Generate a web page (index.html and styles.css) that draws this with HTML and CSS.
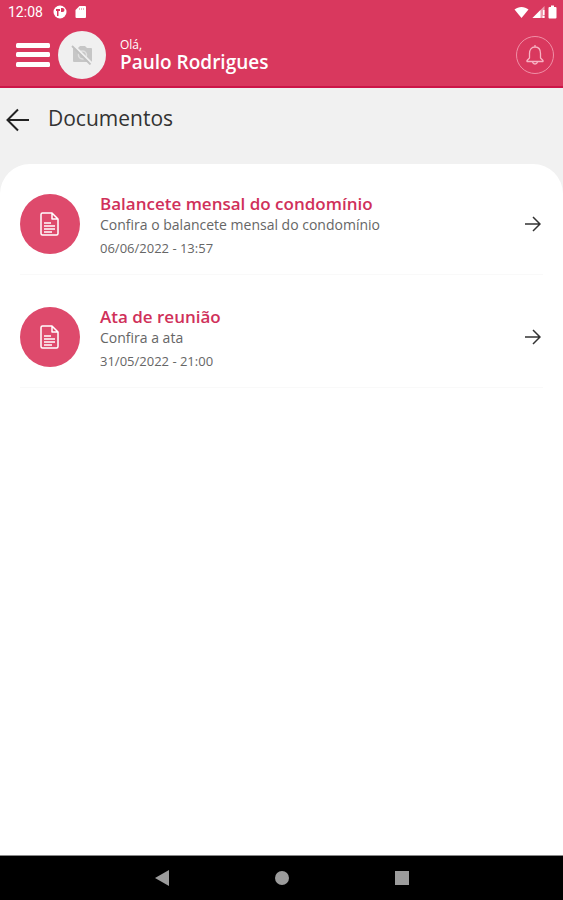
FILE: index.html
```html
<!DOCTYPE html>
<html lang="pt-BR">
<head>
    <meta charset="UTF-8">
    <meta name="viewport" content="width=device-width, initial-scale=1.0">
    <title>Documentos</title>
    <link rel="stylesheet" href="styles.css">
</head>
<body>

    <!-- Header -->
    <header class="header">
        <div class="status-bar">
            <span class="clock">12:08</span>
            <svg width="14" height="14" viewBox="0 0 14 14">
                <circle cx="7" cy="7" r="6.5" fill="#fff"/>
                <path d="M3 4h4v2H5.500v5H4V6H3zM8 3h1.500a2 2 0 0 1 0 4H8z" fill="#d9385e"/>
            </svg>
            <svg width="12" height="14" viewBox="0 0 12 14">
                <path d="M4.500 1H10a1 1 0 0 1 1 1v10a1 1 0 0 1-1 1H1.500a1 1 0 0 1-1-1V5z" fill="#fff"/>
                <path d="M4.500 3v2M6.500 3v2M8.500 3v2" stroke="#d9385e" stroke-width=".4"/>
            </svg>
            <div class="status-right">
                <svg width="15" height="14" viewBox="0 0 15 14">
                    <path d="M7.500 13L.5 4.500C4.500 1 10.500 1 14.500 4.500z" fill="#fff"/>
                </svg>
                <svg width="13" height="14" viewBox="0 0 13 14">
                    <path d="M.5 13L12.500 1v12z" fill="#fff" fill-opacity=".5"/>
                    <path d="M.5 13L8.500 5v8zM10.500 11h2v2h-2zM11 5h1.500v5H11z" fill="#fff"/>
                </svg>
                <svg width="9" height="14" viewBox="0 0 9 14">
                    <path d="M3 .5h3V2h1.500a1 1 0 0 1 1 1v9.500a1 1 0 0 1-1 1h-6a1 1 0 0 1-1-1V3a1 1 0 0 1 1-1H3z" fill="#fff"/>
                </svg>
            </div>
        </div>

        <div class="user-bar">
            <button class="icon-button" aria-label="Menu">
                <svg width="34" height="26" viewBox="0 0 34 26" fill="#fff">
                    <rect y="1" width="34" height="5" rx="1.500"/>
                    <rect y="10" width="34" height="5" rx="1.500"/>
                    <rect y="20" width="34" height="5" rx="1.500"/>
                </svg>
            </button>
            <div class="avatar">
                <svg width="22" height="20" viewBox="0 0 22 20">
                    <path d="M7 3l2-2h5l2 2h4a1 1 0 0 1 1 1v12a1 1 0 0 1-1 1H3a1 1 0 0 1-1-1V4a1 1 0 0 1 1-1z" fill="#c6c6c6"/>
                    <circle cx="11.500" cy="10" r="4" fill="none" stroke="#e0e0e0" stroke-width="1.500"/>
                    <path d="M2.500 0l19 19" stroke="#f0f0f0" stroke-width="2"/>
                    <path d="M1 1l18.500 18.500" stroke="#c0c0c0" stroke-width="1.800"/>
                </svg>
            </div>
            <div class="greeting">
                <div class="hello">Olá,</div>
                <div class="username">Paulo Rodrigues</div>
            </div>
            <button class="icon-button bell" aria-label="Notificações">
                <svg width="20" height="22" viewBox="0 0 20 22" fill="none" stroke="#f7b3c3" stroke-width="1.300" stroke-linejoin="round">
                    <path d="M10 1v2M4.500 14V9.500C4.500 5.800 6.500 3 10 3s5.500 2.800 5.500 6.500V14l2.500 2.500v1H2v-1zM7.500 18c.4 1.500 1.300 2 2.500 2s2.100-.5 2.500-2"/>
                </svg>
            </button>
        </div>
    </header>

    <!-- Page title -->
    <div class="title-bar">
        <button class="icon-button" aria-label="Voltar">
            <svg width="24" height="24" viewBox="0 0 24 24" fill="none" stroke="#222" stroke-width="2">
                <path d="M23 12H2M12 1.500L1.500 12 12 22.500"/>
            </svg>
        </button>
        <h1>Documentos</h1>
    </div>

    <!-- Documents -->
    <main class="documents">
        <a class="document" href="#">
            <span class="document-icon">
                <svg width="20" height="24" viewBox="0 0 20 24" fill="none" stroke="#fff" stroke-width="1.500" stroke-linejoin="round">
                    <path d="M12 1H2.500A1.500 1.500 0 0 0 1 2.500v19A1.500 1.500 0 0 0 2.500 23h14a1.500 1.500 0 0 0 1.500-1.500V7zM12 1v6h6M4 11h7M4 14h11M4 17h11M4 20h8"/>
                </svg>
            </span>
            <span class="document-text">
                <strong>Balancete mensal do condomínio</strong>
                <span class="description">Confira o balancete mensal do condomínio</span>
                <span class="date">06/06/2022 - 13:57</span>
            </span>
            <svg class="arrow" width="16" height="16" viewBox="0 0 16 16" fill="none" stroke="#333" stroke-width="1.500">
                <path d="M0 8h15M8 1l7 7-7 7"/>
            </svg>
        </a>
        <a class="document" href="#">
            <span class="document-icon">
                <svg width="20" height="24" viewBox="0 0 20 24" fill="none" stroke="#fff" stroke-width="1.500" stroke-linejoin="round">
                    <path d="M12 1H2.500A1.500 1.500 0 0 0 1 2.500v19A1.500 1.500 0 0 0 2.500 23h14a1.500 1.500 0 0 0 1.500-1.500V7zM12 1v6h6M4 11h7M4 14h11M4 17h11M4 20h8"/>
                </svg>
            </span>
            <span class="document-text">
                <strong>Ata de reunião</strong>
                <span class="description">Confira a ata</span>
                <span class="date">31/05/2022 - 21:00</span>
            </span>
            <svg class="arrow" width="16" height="16" viewBox="0 0 16 16" fill="none" stroke="#333" stroke-width="1.500">
                <path d="M0 8h15M8 1l7 7-7 7"/>
            </svg>
        </a>
    </main>

    <!-- Android navigation -->
    <nav class="nav-bar">
        <button class="nav-button" aria-label="Voltar">
            <svg width="16" height="16" viewBox="0 0 16 16"><path d="M1 8l14-8v16z" fill="#9c9c9c"/></svg>
        </button>
        <button class="nav-button" aria-label="Início">
            <svg width="16" height="16" viewBox="0 0 16 16"><circle cx="8" cy="8" r="7" fill="#9c9c9c"/></svg>
        </button>
        <button class="nav-button" aria-label="Recentes">
            <svg width="16" height="16" viewBox="0 0 16 16"><rect x="1" y="1" width="14" height="14" fill="#9c9c9c"/></svg>
        </button>
    </nav>

</body>
</html>
```
FILE: styles.css
```css
* {
    box-sizing: border-box;
}

body {
    display: flex;
    flex-direction: column;
    min-height: 100vh;
    margin: 0;
    font-family: "Open Sans", sans-serif;
    background: #f1f1f1;
}

svg {
    display: block;
    flex-shrink: 0;
}

button {
    padding: 0;
    border: 0;
    background: none;
    cursor: pointer;
}

.header {
    color: #fff;
    background: #d9385e;
    border-bottom: 2px solid #cc1548;
}

.status-bar {
    display: flex;
    align-items: center;
    gap: 8px;
    height: 24px;
    padding: 0 6px 0 8px;
}

.clock {
    margin-right: 2px;
    font-family: Roboto, sans-serif;
    font-size: 14px;
}

.status-right {
    display: flex;
    gap: 3px;
    margin-left: auto;
}

.user-bar {
    display: flex;
    align-items: center;
    height: 62px;
    padding: 0 9px 0 16px;
}

.avatar {
    display: flex;
    align-items: center;
    justify-content: center;
    width: 48px;
    height: 48px;
    margin-left: 8px;
    border-radius: 50%;
    background: #f0f0f0;
}

.greeting {
    margin-left: 14px;
}

.hello {
    font-size: 12px;
    line-height: 14px;
}

.username {
    font-size: 19px;
    font-weight: 600;
    line-height: 20px;
}

.bell {
    display: flex;
    align-items: center;
    justify-content: center;
    width: 38px;
    height: 38px;
    margin-left: auto;
    border: 1px solid #f08fa6;
    border-radius: 50%;
}

.title-bar {
    display: flex;
    align-items: center;
    gap: 18px;
    height: 64px;
    padding: 0 6px;
    margin-bottom: 12px;
}

.title-bar h1 {
    margin: 0;
    padding-bottom: 4px;
    font-size: 21px;
    font-weight: 400;
    color: #333;
}

.documents {
    display: flex;
    flex: 1;
    flex-direction: column;
    gap: 2px;
    padding: 0 20px;
    border-radius: 30px 30px 0 0;
    background: #fff;
}

.document {
    display: flex;
    align-items: center;
    gap: 20px;
    padding: 24px 2px 14px 0;
    border-bottom: 1px solid #f9f9f9;
    color: #666;
    text-decoration: none;
}

.document-icon {
    display: flex;
    align-items: center;
    justify-content: center;
    width: 60px;
    height: 60px;
    border-radius: 50%;
    background: #de4a6c;
}

.document-text {
    display: flex;
    flex: 1;
    flex-direction: column;
    padding-top: 6px;
}

.document-text strong {
    font-size: 17px;
    font-weight: 600;
    line-height: 20px;
    color: #d0305a;
}

.description {
    font-size: 14px;
    line-height: 22px;
}

.date {
    font-size: 13px;
    line-height: 24px;
}

.nav-bar {
    display: flex;
    justify-content: center;
    height: 45px;
    border-top: 1px solid #888;
    background: #000;
}

.nav-button {
    display: flex;
    align-items: center;
    justify-content: center;
    width: 120px;
}
```
